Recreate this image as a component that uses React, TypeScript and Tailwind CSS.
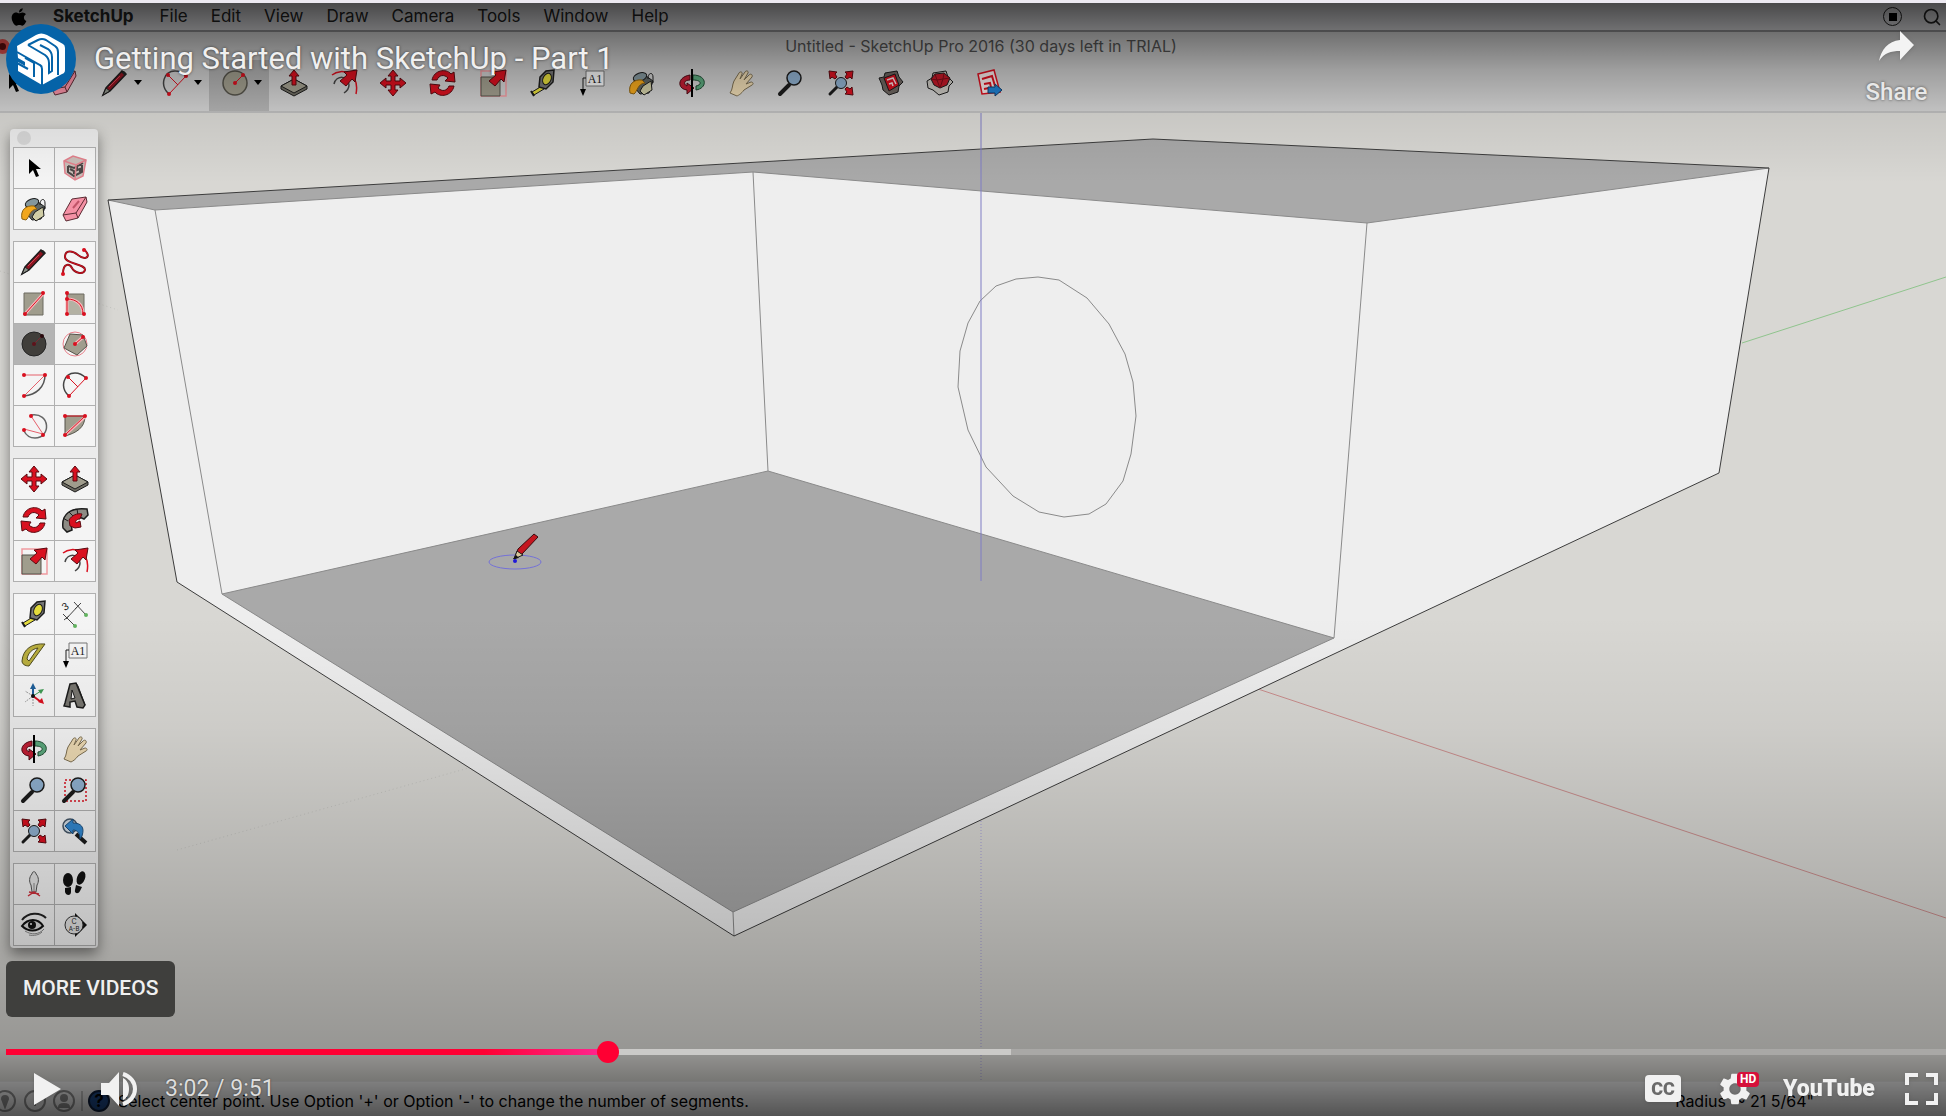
import React, { useState } from 'react';
import { FaApple } from 'react-icons/fa';
import { MdSettings } from 'react-icons/md';
import { Search } from 'lucide-react';

const RED = '#d9101f';
const STONE = '#a09d8d';
const INK = '#1c1c1c';

const Dot = ({ x, y, fill = RED }: { x: number; y: number; fill?: string }) => (
  <circle cx={x} cy={y} r="2" fill={fill} stroke="none" />
);

const lens = (
  <>
    <path d="M3 25l9-9" stroke={INK} strokeWidth="4" strokeLinecap="round" />
    <circle cx="17" cy="9" r="7" fill="#8fb0cf" stroke={INK} strokeWidth="1.5" />
  </>
);

const smallLens = (
  <>
    <path d="M3 25l7-7" stroke={INK} strokeWidth="3" strokeLinecap="round" />
    <circle cx="14" cy="14" r="5.5" fill="#8fb0cf" stroke={INK} />
  </>
);

const bigArrow = (
  <path d="M27 1l-2 12-3-3-6 7-6-5 7-6-3-3z" fill={RED} stroke="#5a0a10" />
);

// All tool glyphs are drawn on a 28x28 grid
const glyphs: Record<string, React.ReactNode> = {
  select: <path d="M9 5v15l4-4 3 7 3-1-3-7h5z" fill="#000" />,
  component: (
    <g stroke="#e2808c" fill="none" strokeWidth="1.5">
      <path d="M3 7l9-5 13 4-3 16-8 4L4 19z" fill="#c9bdb8" />
      <path d="M7 12l6 2 9-5M7 12v6l6 4 8-4V9M9 15l4 2v3M16 13v3l3-1v3" stroke="#4b4645" strokeWidth="2" />
      <path d="M3 7l12 4 10-5M15 11l-1 15" />
    </g>
  ),
  paint: (
    <g stroke={INK}>
      <path d="M6 9l8-5 11 8-4 12-9 1-5-6z" fill="#5f6664" />
      <path d="M15 17l8-5 1 9-8 5-4-4z" fill="#d0cda6" />
      <ellipse cx="12" cy="8" rx="7" ry="4" fill="#84979d" transform="rotate(-20 12 8)" />
      <path d="M20 10c0-7 5-7 5-2v6" fill="none" />
      <path d="M2 24c-2-9 4-14 12-13l3 3c-7 0-8 9-11 11z" fill="#f2a71c" stroke="#8a6010" />
    </g>
  ),
  eraser: (
    <g stroke="#5b2b33">
      <path d="M2 20l9-16 14-2 1 5-9 16-12 3z" fill="#f591a5" />
      <path d="M2 20l13-2L25 2M15 18l2 5" fill="none" />
      <path d="M12 13l6-7" stroke="#c05468" strokeWidth="2" />
    </g>
  ),
  pencil: (
    <>
      <path d="M2 26l3-7L21 2l4 3L9 22z" fill="#8c1420" stroke={INK} strokeWidth="1.5" />
      <path d="M2 26l3-7 4 3z" fill="#8a8f86" stroke={INK} />
      <path d="M20 3l3-1 2 2-1 3z" fill="#222" />
      <path d="M8 18L19 7" stroke="#d34352" />
    </>
  ),
  freehand: (
    <>
      <path
        d="M2 26C2 14 9 16 11 20s11 8 13 2c1-6-20-6-20-13S11 2 17 7s12 3 9-2-3-3-3-3"
        fill="none" stroke="#7a1119" strokeWidth="2"
      />
      <path
        d="M2 26C2 14 9 16 11 20s11 8 13 2c1-6-20-6-20-13S11 2 17 7s12 3 9-2-3-3-3-3"
        fill="none" stroke={RED}
      />
      <Dot x={23} y={2} />
      <Dot x={2} y={26} />
    </>
  ),
  rect: (
    <>
      <path d="M4 4h19v22H4z" fill={STONE} stroke="#6d6b60" />
      <path d="M5 25L23 5" stroke="#f6b8bc" strokeWidth="3" />
      <path d="M5 25L23 5" stroke={RED} />
      <Dot x={5} y={25} />
      <Dot x={23} y={4} />
    </>
  ),
  rotRect: (
    <>
      <path d="M6 5h17v20H6z" fill={STONE} stroke="#6d6b60" />
      <path d="M6 25V10c9 0 16 5 16 15z" fill="#b3b1a3" />
      <path d="M6 25V10c9 0 16 5 16 15" fill="none" stroke="#f6b8bc" strokeWidth="3" />
      <path d="M6 25V4M6 10c9 0 16 5 16 15" fill="none" stroke={RED} />
      <Dot x={6} y={4} />
      <Dot x={6} y={10} />
      <Dot x={6} y={25} />
      <Dot x={23} y={25} />
    </>
  ),
  circle: (
    <>
      <circle cx="14" cy="14" r="12" fill={STONE} stroke="#55534a" strokeWidth="1.5" />
      <path d="M14 14l8-8" stroke={RED} />
      <Dot x={14} y={14} />
      <Dot x={22} y={6} />
    </>
  ),
  circleActive: (
    <>
      <circle cx="14" cy="14" r="12" fill="#403e3a" stroke="#242424" />
      <path d="M14 14l8-8" stroke="#7a2931" />
      <Dot x={14} y={14} fill="#5d131b" />
      <Dot x={22} y={6} fill="#2a0a0e" />
    </>
  ),
  polygon: (
    <>
      <circle cx="14" cy="14" r="12" fill="none" stroke="#e8808a" />
      <path d="M9 4l13 1 4 11-10 9-13-7z" fill={STONE} stroke="#55534a" />
      <path d="M14 14l8-7" stroke="#f6b8bc" strokeWidth="3" />
      <path d="M14 14l8-7" stroke={RED} />
      <Dot x={14} y={14} />
      <Dot x={22} y={7} />
    </>
  ),
  arc: (
    <>
      <path d="M25 4c0 12-9 20-21 21" fill="none" stroke="#555" strokeWidth="1.5" />
      <path d="M4 4h21L4 25" fill="none" stroke="#e5606b" />
      <Dot x={4} y={4} />
      <Dot x={25} y={4} />
      <Dot x={4} y={25} />
    </>
  ),
  arc2: (
    <>
      <path d="M8 25C-2 16 3 2 14 2c6 0 9 3 11 5" fill="none" stroke="#444" strokeWidth="1.5" />
      <path d="M7 6l10 10M25 7L8 25" fill="none" stroke={RED} />
      <Dot x={7} y={6} />
      <Dot x={25} y={7} />
      <Dot x={8} y={25} />
    </>
  ),
  arc3: (
    <>
      <path d="M11 3c20-3 20 23 4 23-5 0-9-3-11-7" fill="none" stroke="#666" strokeWidth="1.5" />
      <path d="M11 4l12 18L4 17" fill="none" stroke="#e5606b" />
      <Dot x={11} y={4} />
      <Dot x={4} y={18} />
      <Dot x={23} y={23} />
    </>
  ),
  pie: (
    <>
      <path d="M4 4h20c0 12-9 17-20 20z" fill={STONE} stroke="#55534a" />
      <path d="M4 23L24 5" stroke="#f6b8bc" strokeWidth="3" />
      <path d="M4 4h20L4 23" fill="none" stroke={RED} strokeDasharray="20 0" />
      <Dot x={4} y={4} />
      <Dot x={24} y={4} />
      <Dot x={4} y={23} />
    </>
  ),
  move: (
    <path
      d="M14 1l5 6h-3v5h5V9l6 5-6 5v-3h-5v5h3l-5 6-5-6h3v-5H7v3l-6-5 6-5v3h5V7H9z"
      fill={RED} stroke="#5a0a10"
    />
  ),
  pushpull: (
    <>
      <path d="M1 17l13-7 13 7v3l-13 7-13-7z" fill="#6e6c62" stroke={INK} />
      <path d="M1 17l13-7 13 7-13 7z" fill={STONE} stroke={INK} />
      <path d="M14 1l5 6h-3v9h-4V7H9z" fill={RED} stroke="#5a0a10" />
    </>
  ),
  rotate: (
    <g fill={RED} stroke="#5a0a10">
      <path d="M3 11C5 1 17-1 22 5l3-2 1 10-10-1 3-3c-4-4-9-3-11 2z" />
      <path d="M25 17C23 27 11 29 6 23l-4 2-1-10 10 1-2 3c4 4 9 3 11-2z" />
    </g>
  ),
  follow: (
    <>
      <path d="M2 22C0 8 10 1 26 3l1 6-4 4C14 9 9 14 11 24l-5 2z" fill="#8d8b84" stroke={INK} strokeWidth="1.5" />
      <path d="M2 12l5 3M8 6l4 4M16 3l1 6" stroke={INK} />
      <path d="M8 14c3-5 8-7 13-6l-2 5c-4 0-5 3-4 4l4-2 1 6-6 1-5-2z" fill={RED} stroke="#5a0a10" />
    </>
  ),
  scale: (
    <>
      <path d="M2 2h25v25H2z" fill="none" stroke="#f09aa0" strokeWidth="1.5" />
      <path d="M2 8h19v19H2z" fill={STONE} stroke="#55534a" />
      {bigArrow}
    </>
  ),
  offset: (
    <>
      <path d="M2 6C12-2 30 4 26 25" fill="none" stroke={RED} strokeWidth="1.5" />
      <path d="M4 15c2-9 15-9 15 1 0 4-2 6-5 8" fill="none" stroke="#444" strokeWidth="1.5" />
      {bigArrow}
    </>
  ),
  tape: (
    <>
      <path d="M3 23l10-6 2 3-10 6z" fill="#e4dc3c" stroke={INK} />
      <path d="M2 22l3 5" stroke={INK} strokeWidth="2" />
      <path d="M11 8l6-6 8-1-1 12-7 7-7-2z" fill="#777" stroke={INK} strokeWidth="1.5" />
      <ellipse cx="18" cy="10" rx="4" ry="6" fill="#e4dc3c" stroke={INK} transform="rotate(25 18 10)" />
    </>
  ),
  dimension: (
    <g fill="none" stroke="#444">
      <path d="M2 14l12 12M13 2l12 13M5 19L18 5M3 20l5-4M14 9l6-6" />
      <text x="2" y="10" fontSize="10" fill={INK} stroke="none" transform="rotate(-35 5 8)">3</text>
      <Dot x={14} y={26} fill="#61b35f" />
      <Dot x={25} y={15} fill="#61b35f" />
    </g>
  ),
  protractor: (
    <>
      <path d="M2 20C3 8 12 2 25 3L9 25c-4 0-7-2-7-5z" fill="#b9ae3e" stroke="#4e4a1c" />
      <path d="M7 18c1-6 5-10 11-11L9 20z" fill="#f3f3f3" stroke="#4e4a1c" />
    </>
  ),
  text: (
    <>
      <path d="M8 2h18v15H8z" fill="#f5f5f5" stroke="#777" />
      <text x="17" y="14" fontSize="12" textAnchor="middle" fill={INK} className="font-['Liberation_Serif',serif]">A1</text>
      <path d="M8 9H5v12" fill="none" stroke={INK} />
      <path d="M2 20h6l-3 7z" fill="#000" />
    </>
  ),
  axes: (
    <>
      <path d="M13 14V5" stroke="#1f5f99" strokeWidth="2" />
      <path d="M10 7l3-6 3 6z" fill="#1f5f99" />
      <path d="M13 14l8-5" stroke="#3f9a53" />
      <path d="M18 8l6-1-3 5z" fill="#3f9a53" />
      <path d="M13 14l8 6" stroke={RED} strokeWidth="2" />
      <path d="M18 20l6 2-2-6z" fill={RED} />
      <path d="M13 14v10M13 14l-8 6M13 14L5 9" stroke="#999" strokeDasharray="2 1" />
      <Dot x={13} y={14} fill="#111" />
    </>
  ),
  text3d: (
    <g fill="#77756f" stroke={INK}>
      <path d="M9 2l6-1 9 22-2 3-6-1-2-6-5 1v5l-6-1 1-3z" strokeWidth="1.5" />
      <path d="M11 8l3 8-4 1z" fill="#eee" />
      <path d="M15 1l2 3 7 19" fill="none" />
    </g>
  ),
  orbit: (
    <>
      <path d="M15 6c14 0 15 13 3 15v-4c6-1 6-6-3-6z" fill="#5ba77c" stroke="#1d4a30" />
      <path d="M12 6C-1 8-1 20 9 21v4l7-6-7-5v3c-4-2-3-6 3-6z" fill="#bf1e33" stroke="#4f0a14" />
      <path d="M14 0v28" stroke="#000" strokeWidth="2" />
    </>
  ),
  pan: (
    <path
      d="M3 24c3-4 2-8 4-12l5-8c1-2 4-1 3 1l-2 5 5-7c1-2 4-1 3 1l-4 7 5-5c2-2 4 0 3 2l-6 7 5-2c2 0 3 2 1 3l-8 5c-3 4-5 5-7 6z"
      fill="#ecd9b2" stroke="#7d6f52"
    />
  ),
  zoom: lens,
  zoomWindow: (
    <>
      <path d="M4 4h21v21H4z" fill="none" stroke={RED} strokeWidth="1.5" strokeDasharray="2 2" />
      {lens}
    </>
  ),
  extents: (
    <>
      {smallLens}
      <g fill={RED} stroke="#5a0a10">
        <path d="M2 2l8 1-2 2 2 3-2 2-3-2-2 2z" />
        <path d="M26 2l-8 1 2 2-2 3 2 2 3-2 2 2z" />
        <path d="M26 26l-8-1 2-2-2-3 2-2 3 2 2-2z" />
      </g>
    </>
  ),
  previous: (
    <>
      <path d="M15 17l10 9" stroke={INK} strokeWidth="4" />
      <circle cx="9" cy="9" r="7" fill="#cfd9e2" stroke="#456" strokeWidth="1.5" />
      <path d="M4 9l8-7v4c8 0 12 4 9 13l-2 3c0-5-2-9-7-9v4z" fill="#3187cf" stroke="#1c4e7c" />
    </>
  ),
  camera: (
    <>
      <path d="M12 4c0-3 4-3 4 0 3 3 3 8 1 11l-1 7h-4l-1-7c-2-3-2-8 1-11z" fill="#e5e5e5" stroke="#555" />
      <path d="M14 13v8" stroke="#888" />
      <path d="M8 26l6-4 6 4M9 22l10 2" fill="none" stroke="#d0303c" strokeWidth="1.5" />
    </>
  ),
  walk: (
    <g fill="#111">
      <ellipse cx="7" cy="10" rx="5" ry="7" />
      <ellipse cx="20" cy="8" rx="4" ry="7" transform="rotate(20 20 8)" />
      <path d="M4 18l6-1v5c0 4-5 4-6 0zM15 15l6 2-2 4c-2 4-6 2-5-1z" />
    </g>
  ),
  look: (
    <>
      <path d="M2 9C8 1 20 1 26 7" fill="none" stroke="#222" strokeWidth="2" />
      <path d="M2 15c6-8 16-8 21 0-6 6-15 6-21 0z" fill="#ddd" stroke="#111" strokeWidth="2" />
      <circle cx="12" cy="14" r="4" fill="#111" />
      <circle cx="11" cy="13" r="1" fill="#eee" />
      <path d="M5 20c6 4 14 4 19-2M9 24c5 1 10 0 13-3" fill="none" stroke="#888" />
    </>
  ),
  section: (
    <>
      <path d="M14 2l12 12-12 12z" fill="#111" />
      <circle cx="13" cy="14" r="9" fill="#e5e5e5" stroke="#333" />
      <text x="13" y="13" fontSize="7" textAnchor="middle" fill="#222">C</text>
      <text x="13" y="20" fontSize="6" textAnchor="middle" fill="#222">A-B</text>
    </>
  ),
  warehouse: (
    <g stroke={INK}>
      <path d="M2 9l5-1 1-4 12-2 2 6 4 5-4 4-1 6-9 3-6-5-1-5z" fill="#6d6560" />
      <path d="M7 9l11-4 4 11-10 6z" fill={RED} />
      <path d="M10 11l6-2 3 6M12 15l3-1 1 3" fill="none" stroke="#f3d9da" strokeWidth="1.5" />
    </g>
  ),
  extension: (
    <g stroke={INK}>
      <path d="M1 12l5-3 1-5 13-2 2 6 5 5-4 4-1 6-9 3-6-5-5-2z" fill="#c9c6c0" />
      <path d="M5 10l4-5 9-1 6 5-3 7-7 3-6-3z" fill="#c01726" />
      <path d="M5 10l6 1 6-1 7-1M9 5l2 6 3 8 3-9 1-6" fill="none" stroke="#7b0d18" />
    </g>
  ),
  layout: (
    <>
      <path d="M2 5l16-4 6 22-18 2z" fill="#f6e9e9" stroke={RED} strokeWidth="1.5" />
      <path d="M6 10l10-3 3 10M8 15l6-1 1 4M8 20l5-1" fill="none" stroke={RED} strokeWidth="2" />
      <path d="M12 18h7v-3l7 6-7 6v-3h-7z" fill="#1d7fd0" stroke="#123f6b" />
    </>
  ),
};

const Glyph = ({ name }: { name: string }) => (
  <svg viewBox="0 0 28 28" className="h-[28px] w-[28px]" fill="none" aria-hidden="true">
    {glyphs[name]}
  </svg>
);

const menus = ['File', 'Edit', 'View', 'Draw', 'Camera', 'Tools', 'Window', 'Help'];

const dropdownTools = ['pencil', 'arc2', 'circle'];
const toolbarTools = [
  'pushpull', 'offset', 'move', 'rotate', 'scale', 'tape', 'text', 'paint',
  'orbit', 'pan', 'zoom', 'extents', 'warehouse', 'extension', 'layout',
];

const paletteGroups = [
  ['select', 'component', 'paint', 'eraser'],
  ['pencil', 'freehand', 'rect', 'rotRect', 'circleActive', 'polygon', 'arc', 'arc2', 'arc3', 'pie'],
  ['move', 'pushpull', 'rotate', 'follow', 'scale', 'offset'],
  ['tape', 'dimension', 'protractor', 'text', 'axes', 'text3d'],
  ['orbit', 'pan', 'zoom', 'zoomWindow', 'extents', 'previous'],
  ['camera', 'walk', 'look', 'section'],
];

const MenuBar = () => (
  <nav className="flex h-[29px] items-center border-b-2 border-[#8e8e90] bg-[#d6d6d9] pl-[11px] pr-1 text-[17px] text-[#222]">
    <FaApple className="mr-[26px] h-5 w-4 text-black" />
    <button className="mr-[26px] font-bold">SketchUp</button>
    <div className="flex gap-[23px]">
      {menus.map(menu => (
        <button key={menu}>{menu}</button>
      ))}
    </div>
    <div className="ml-auto flex items-center gap-5">
      <span className="flex h-[19px] w-[19px] items-center justify-center rounded-full border border-[#222]">
        <span className="h-2 w-2 bg-black" />
      </span>
      <Search className="h-5 w-5" />
    </div>
  </nav>
);

const Toolbar = () => (
  <div className="h-[81px] border-b-2 border-[#bdbdbd] bg-[#d0d0d0]">
    <div className="relative flex h-[28px] items-center justify-center pl-4 text-[16px] text-[#555]">
      <span className="absolute -left-[5px] h-[15px] w-[15px] rounded-full border-4 border-[#e0504c] bg-[#5a0d0d]" />
      Untitled - SketchUp Pro 2016 (30 days left in TRIAL)
    </div>
    <div className="flex h-[51px]">
      <button aria-label="select" className="flex w-[39px] items-center pb-[6px]">
        <Glyph name="select" />
      </button>
      <button aria-label="eraser" className="flex w-[50px] items-center justify-center pb-[6px]">
        <Glyph name="eraser" />
      </button>
      {dropdownTools.map(tool => (
        <button
          key={tool}
          aria-label={tool}
          className={`flex w-[60px] items-center gap-1 pb-[6px] pl-3 ${tool === 'circle' ? 'bg-black/15' : ''}`}
        >
          <Glyph name={tool} />
          <svg viewBox="0 0 10 6" className="h-[6px] w-[10px]"><path d="M1 0h8L5 5z" /></svg>
        </button>
      ))}
      <div className="flex w-[746px]">
        {toolbarTools.map(tool => (
          <button key={tool} aria-label={tool} className="flex flex-1 items-center justify-center pb-[6px]">
            <Glyph name={tool} />
          </button>
        ))}
      </div>
    </div>
  </div>
);

const Palette = () => (
  <aside className="relative ml-[10px] mt-[16px] w-[88px] rounded bg-[#ebebeb] pb-[2px] pl-[3px] pr-[2px] shadow-[0_6px_14px_rgba(0,0,0,0.45)]">
    <div className="flex h-[18px] items-center pl-1">
      <span className="h-[14px] w-[14px] rounded-full bg-[#d6d6d6]" />
    </div>
    <div className="flex flex-col gap-[11px]">
      {paletteGroups.map(group => (
        <div key={group[0]} className="grid grid-cols-2 gap-px border border-[#b0b0b0] bg-[#b0b0b0]">
          {group.map(tool => (
            <button
              key={tool}
              aria-label={tool}
              className={`flex h-[40px] items-center justify-center ${tool === 'circleActive' ? 'bg-[#b4b4b4]' : 'bg-[#f4f4f4]'}`}
            >
              <Glyph name={tool} />
            </button>
          ))}
        </div>
      ))}
    </div>
  </aside>
);

const Scene = () => (
  <svg
    viewBox="0 113 1946 968"
    preserveAspectRatio="none"
    className="absolute inset-0 h-full w-full"
    fill="none"
    aria-label="3D model"
  >
    {/* axes behind the model */}
    <path d="M1742 343l204-66" stroke="#8fc48d" />
    <path d="M1258 689l688 229" stroke="#c98d8c" />
    <path d="M981 800V1081" stroke="#a5a0d8" strokeDasharray="1 2" />
    <path d="M0 271l118 39M177 850l320-90" stroke="#c4c4c0" strokeDasharray="1 3" />

    {/* walls */}
    <path d="M108 200L1153 139l616 29-50 305-985 463L177 582z" fill="#eeeeee" />
    <path d="M108 200L1153 139l616 29-402 55-614-51-598 38z" fill="#a9a9a9" />
    <path d="M222 594L768 471l566 167-601 274z" fill="#a9a9a9" />

    <g stroke="#8a8a8a">
      <path d="M108 200l47 10 598-38 614 51 402-55M155 210l67 384 511 318 601-274 33-415M753 172l15 299M222 594l546-123 566 167M733 912l1 24" />
      <path d="M1038 277l21 3 28 18 22 26 16 30 8 28 3 34-5 38-8 27-17 23-17 10-25 3-25-5-26-16-27-29-18-37-10-43 2-36 8-28 12-22 16-15 20-7z" />
    </g>
    <path d="M108 200L1153 139l616 29-50 305-985 463L177 582z" stroke="#3c3c3c" />
    <path d="M981 113V581" stroke="#7f7cc4" />

    {/* pencil cursor */}
    <ellipse cx="515" cy="562" rx="26" ry="7" stroke="#7471d8" />
    <path d="M514 559l4-10 16-15 4 3-16 17z" fill="#c5161f" stroke="#3a0b0e" />
    <path d="M514 559l3-8 6 4z" fill="#d8c79a" stroke={INK} />
    <path d="M513 559l3-4 3 3z" fill="#111" />
    <circle cx="515" cy="561" r="2" fill="#2018d8" />
  </svg>
);

const StatusBar = () => (
  <div className="flex h-[35px] items-center border-t border-[#dcdcdc] bg-[#e8e8e8] pt-[3px] text-[16px] text-black">
    <svg viewBox="0 0 112 24" className="h-[24px] w-[112px]" fill="none" stroke="#8a8a8a" strokeWidth="2">
      <circle cx="5" cy="12" r="10" />
      <path d="M5 18l-3-8c0-4 6-4 6 0z" fill="#8a8a8a" />
      <circle cx="35" cy="12" r="10" />
      <path d="M35 8v9" />
      <circle cx="64" cy="12" r="10" />
      <circle cx="64" cy="9" r="3" fill="#8a8a8a" />
      <path d="M59 18c0-4 10-4 10 0z" fill="#8a8a8a" />
      <path d="M82 2v20" strokeWidth="1" />
      <circle cx="99" cy="12" r="10" fill="#1b4480" stroke="#0c1c38" />
      <text x="99" y="18" fontSize="17" fontWeight="700" textAnchor="middle" fill="#000" stroke="none">?</text>
    </svg>
    <span className="ml-[6px]">Select center point. Use Option '+' or Option '-' to change the number of segments.</span>
    <span className="ml-auto mr-[132px]">Radius&nbsp; ~ 21 5/64"</span>
  </div>
);

const ChannelLogo = () => (
  <svg viewBox="0 0 70 70" className="h-[70px] w-[70px] shrink-0" fill="none">
    <circle cx="35" cy="35" r="35" fill="#0563a8" />
    <path
      d="M11 22L30 11q5-3 11 0l16 9q2 1 2 4v22q0 3-3 4L36 61 12 47v-9l7 4v-4l-7-4z"
      fill="#fff"
    />
    <g stroke="#0563a8" strokeWidth="2">
      <path d="M22 21l10-5q4-2 8 0l9 6q3 2 3 6v23" />
      <path d="M22 21l17 10q4 3 4 8v10l3-2V33q0-5-4-8l-8-4" />
      <path d="M11 28l23 13q2 1 2 4v17M11 39l11 6M19 34l9 5v14" />
    </g>
  </svg>
);

const PlayerHeader = () => (
  <header className="flex items-start justify-between pl-[6px] pt-[21px]">
    <div className="flex items-center gap-[18px]">
      <a href="#channel" aria-label="Channel"><ChannelLogo /></a>
      <a href="#video" className="text-[31px] leading-[36px] text-[#f0f0f0] [text-shadow:0_0_3px_rgba(0,0,0,0.6)]">
        Getting Started with SketchUp - Part 1
      </a>
    </div>
    <button className="flex w-[99px] flex-col items-center gap-4 pt-[7px] text-[24px] font-medium leading-[30px] text-[#e8e8e8] [text-shadow:0_0_3px_rgba(0,0,0,0.6)]">
      <svg viewBox="0 0 36 30" className="h-[30px] w-[36px] drop-shadow" fill="#f3f3f3">
        <path d="M21 0l14 14-14 15v-9C12 20 5 22 0 30 2 19 9 10 21 9z" />
      </svg>
      Share
    </button>
  </header>
);

const duration = 591;
const buffered = 51.8;

const formatTime = (s: number) => `${Math.floor(s / 60)}:${String(s % 60).padStart(2, '0')}`;

const PlayerControls = () => {
  const [time, setTime] = useState(182);
  const played = (time / duration) * 100;
  const track = `linear-gradient(to right, #ff0033 0%, #ff0033 ${played * 0.8}%, #ff2791 ${played}%, #cbcac8 ${played}%, #cbcac8 ${buffered}%, #a9a8a6 ${buffered}%)`;

  return (
    <footer className="mt-auto">
      <button className="mb-[24px] ml-[6px] h-[56px] rounded-md bg-[#3f3f3d] px-[17px] text-[21px] font-medium text-[#f0f0f0]">
        MORE VIDEOS
      </button>
      <div className="pl-[6px]">
        <input
          type="range"
          aria-label="Seek"
          min={0}
          max={duration}
          value={time}
          onChange={e => setTime(Number(e.target.value))}
          style={{ '--track': track } as React.CSSProperties}
          className="block h-[22px] w-full cursor-pointer appearance-none bg-transparent [&::-webkit-slider-runnable-track]:h-[6px] [&::-webkit-slider-runnable-track]:[background:var(--track)] [&::-webkit-slider-thumb]:-mt-2 [&::-webkit-slider-thumb]:h-[22px] [&::-webkit-slider-thumb]:w-[22px] [&::-webkit-slider-thumb]:appearance-none [&::-webkit-slider-thumb]:rounded-full [&::-webkit-slider-thumb]:bg-[#ff0033]"
        />
      </div>
      <div className="flex h-[53px] items-center pb-px pl-[23px] text-[#f1f1f1]">
        <button aria-label="Play">
          <svg viewBox="0 0 48 48" className="h-12 w-12 drop-shadow" fill="currentColor">
            <path d="M11 8l27 16-27 16z" />
          </svg>
        </button>
        <button aria-label="Mute" className="ml-6">
          <svg viewBox="0 0 48 48" className="h-12 w-12 drop-shadow" fill="currentColor">
            <path d="M6 18h8L24 7v34L14 30H6zM28 13c4 2 6 6 6 11s-2 9-6 11z" />
            <path d="M28 9c7 2 12 8 12 15s-5 13-12 15" fill="none" stroke="currentColor" strokeWidth="4" />
          </svg>
        </button>
        <span className="ml-[22px] text-[23px] text-[#dddddd] [text-shadow:0_0_2px_rgba(0,0,0,0.5)]">
          {formatTime(time)} / {formatTime(duration)}
        </span>
        <div className="ml-auto flex items-center gap-6">
          <button aria-label="Subtitles">
            <svg viewBox="0 0 48 48" className="h-12 w-12 drop-shadow" fill="currentColor">
              <rect x="6" y="10" width="36" height="27" rx="4" />
              <text x="24" y="30" fontSize="18" fontWeight="900" textAnchor="middle" fill="#6a6a6a">CC</text>
            </svg>
          </button>
          <button aria-label="Settings" className="relative flex h-12 w-12 items-center justify-center">
            <MdSettings className="h-[38px] w-[38px] drop-shadow" />
            <span className="absolute left-[26px] top-[7px] rounded-sm bg-[#d6103a] px-[3px] text-[12px] font-bold leading-[15px] text-white">
              HD
            </span>
          </button>
          <a
            href="#youtube"
            className="w-[91px] whitespace-nowrap text-[23px] font-black drop-shadow"
          >
            YouTube
          </a>
          <button aria-label="Full screen">
            <svg viewBox="0 0 48 48" className="h-12 w-12 drop-shadow" fill="none" stroke="currentColor" strokeWidth="4">
              <path d="M9 20V10h11M28 10h10v10M38 28v10H28M20 38H9V28" />
            </svg>
          </button>
        </div>
      </div>
    </footer>
  );
};

const App: React.FC = () => {
  return (
    <div className="flex min-h-screen flex-col bg-[#ece9f1] pt-[3px]">
      <div className="relative grid flex-1 overflow-hidden">
        {/* Recorded desktop */}
        <div className="flex flex-col font-[Inter,sans-serif] [grid-area:1/1]">
          <MenuBar />
          <Toolbar />
          <main className="relative flex-1 bg-[#d8d7d3]">
            <Scene />
            <div className="flex"><Palette /></div>
          </main>
          <StatusBar />
        </div>

        {/* Player chrome */}
        <div className="relative flex flex-col font-[Roboto,sans-serif] [grid-area:1/1]">
          <div className="pointer-events-none absolute inset-x-0 top-0 h-[180px] bg-[linear-gradient(to_bottom,rgba(0,0,0,0.66)_0px,rgba(0,0,0,0.46)_30px,rgba(0,0,0,0.24)_67px,rgba(0,0,0,0.08)_107px,rgba(0,0,0,0)_180px)]" />
          <div className="pointer-events-none absolute inset-x-0 bottom-0 h-[500px] bg-[linear-gradient(to_top,rgba(0,0,0,0.64)_0px,rgba(0,0,0,0.45)_35px,rgba(0,0,0,0.3)_66px,rgba(0,0,0,0.165)_236px,rgba(0,0,0,0.05)_390px,rgba(0,0,0,0)_500px)]" />
          <div className="relative flex flex-1 flex-col">
            <PlayerHeader />
            <PlayerControls />
          </div>
        </div>
      </div>
    </div>
  );
};

export default App;
